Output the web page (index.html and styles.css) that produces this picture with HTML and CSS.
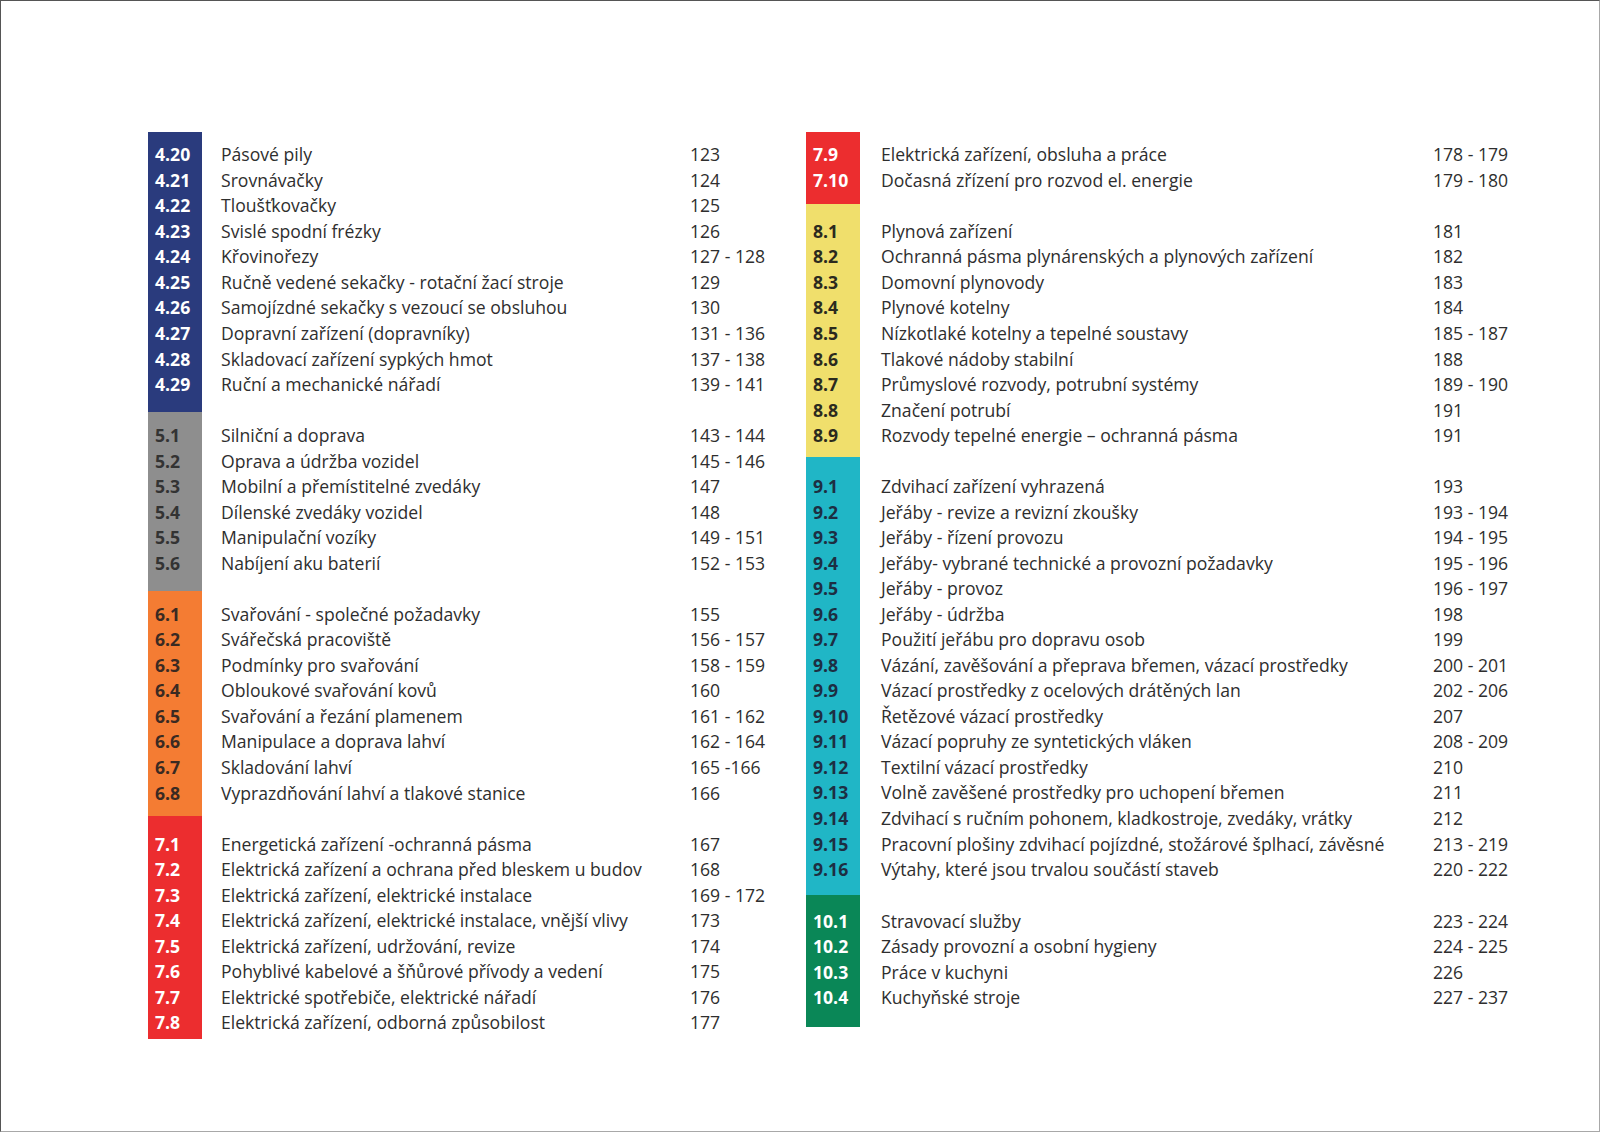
FILE: index.html
```html
<!DOCTYPE html>
<html lang="cs">
<head>
<meta charset="utf-8">
<title>Obsah</title>
<link rel="stylesheet" href="styles.css">
</head>
<body>
<div class="page">
  <div class="col col-left">
    <section class="sec blue s-l1">
      <div class="row"><span class="code">4.20</span><span class="desc">Pásové pily</span><span class="pg">123</span></div>
      <div class="row"><span class="code">4.21</span><span class="desc">Srovnávačky</span><span class="pg">124</span></div>
      <div class="row"><span class="code">4.22</span><span class="desc">Tloušťkovačky</span><span class="pg">125</span></div>
      <div class="row"><span class="code">4.23</span><span class="desc">Svislé spodní frézky</span><span class="pg">126</span></div>
      <div class="row"><span class="code">4.24</span><span class="desc">Křovinořezy</span><span class="pg">127 - 128</span></div>
      <div class="row"><span class="code">4.25</span><span class="desc">Ručně vedené sekačky - rotační žací stroje</span><span class="pg">129</span></div>
      <div class="row"><span class="code">4.26</span><span class="desc">Samojízdné sekačky s vezoucí se obsluhou</span><span class="pg">130</span></div>
      <div class="row"><span class="code">4.27</span><span class="desc">Dopravní zařízení (dopravníky)</span><span class="pg">131 - 136</span></div>
      <div class="row"><span class="code">4.28</span><span class="desc">Skladovací zařízení sypkých hmot</span><span class="pg">137 - 138</span></div>
      <div class="row"><span class="code">4.29</span><span class="desc">Ruční a mechanické nářadí</span><span class="pg">139 - 141</span></div>
    </section>
    <section class="sec gray s-l2">
      <div class="row"><span class="code">5.1</span><span class="desc">Silniční a doprava</span><span class="pg">143 - 144</span></div>
      <div class="row"><span class="code">5.2</span><span class="desc">Oprava a údržba vozidel</span><span class="pg">145 - 146</span></div>
      <div class="row"><span class="code">5.3</span><span class="desc">Mobilní a přemístitelné zvedáky</span><span class="pg">147</span></div>
      <div class="row"><span class="code">5.4</span><span class="desc">Dílenské zvedáky vozidel</span><span class="pg">148</span></div>
      <div class="row"><span class="code">5.5</span><span class="desc">Manipulační vozíky</span><span class="pg">149 - 151</span></div>
      <div class="row"><span class="code">5.6</span><span class="desc">Nabíjení aku baterií</span><span class="pg">152 - 153</span></div>
    </section>
    <section class="sec orange s-l3">
      <div class="row"><span class="code">6.1</span><span class="desc">Svařování - společné požadavky</span><span class="pg">155</span></div>
      <div class="row"><span class="code">6.2</span><span class="desc">Svářečská pracoviště</span><span class="pg">156 - 157</span></div>
      <div class="row"><span class="code">6.3</span><span class="desc">Podmínky pro svařování</span><span class="pg">158 - 159</span></div>
      <div class="row"><span class="code">6.4</span><span class="desc">Obloukové svařování kovů</span><span class="pg">160</span></div>
      <div class="row"><span class="code">6.5</span><span class="desc">Svařování a řezání plamenem</span><span class="pg">161 - 162</span></div>
      <div class="row"><span class="code">6.6</span><span class="desc">Manipulace a doprava lahví</span><span class="pg">162 - 164</span></div>
      <div class="row"><span class="code">6.7</span><span class="desc">Skladování lahví</span><span class="pg">165 -166</span></div>
      <div class="row"><span class="code">6.8</span><span class="desc">Vyprazdňování lahví a tlakové stanice</span><span class="pg">166</span></div>
    </section>
    <section class="sec red s-l4">
      <div class="row"><span class="code">7.1</span><span class="desc">Energetická zařízení -ochranná pásma</span><span class="pg">167</span></div>
      <div class="row"><span class="code">7.2</span><span class="desc">Elektrická zařízení a ochrana před bleskem u budov</span><span class="pg">168</span></div>
      <div class="row"><span class="code">7.3</span><span class="desc">Elektrická zařízení, elektrické instalace</span><span class="pg">169 - 172</span></div>
      <div class="row"><span class="code">7.4</span><span class="desc">Elektrická zařízení, elektrické instalace, vnější vlivy</span><span class="pg">173</span></div>
      <div class="row"><span class="code">7.5</span><span class="desc">Elektrická zařízení, udržování, revize</span><span class="pg">174</span></div>
      <div class="row"><span class="code">7.6</span><span class="desc">Pohyblivé kabelové a šňůrové přívody a vedení</span><span class="pg">175</span></div>
      <div class="row"><span class="code">7.7</span><span class="desc">Elektrické spotřebiče, elektrické nářadí</span><span class="pg">176</span></div>
      <div class="row"><span class="code">7.8</span><span class="desc">Elektrická zařízení, odborná způsobilost</span><span class="pg">177</span></div>
    </section>
  </div>
  <div class="col col-right">
    <section class="sec red s-r1">
      <div class="row"><span class="code">7.9</span><span class="desc">Elektrická zařízení, obsluha a práce</span><span class="pg">178 - 179</span></div>
      <div class="row"><span class="code">7.10</span><span class="desc">Dočasná zřízení pro rozvod el. energie</span><span class="pg">179 - 180</span></div>
    </section>
    <section class="sec yellow s-r2">
      <div class="row"><span class="code">8.1</span><span class="desc">Plynová zařízení</span><span class="pg">181</span></div>
      <div class="row"><span class="code">8.2</span><span class="desc">Ochranná pásma plynárenských a plynových zařízení</span><span class="pg">182</span></div>
      <div class="row"><span class="code">8.3</span><span class="desc">Domovní plynovody</span><span class="pg">183</span></div>
      <div class="row"><span class="code">8.4</span><span class="desc">Plynové kotelny</span><span class="pg">184</span></div>
      <div class="row"><span class="code">8.5</span><span class="desc">Nízkotlaké kotelny a tepelné soustavy</span><span class="pg">185 - 187</span></div>
      <div class="row"><span class="code">8.6</span><span class="desc">Tlakové nádoby stabilní</span><span class="pg">188</span></div>
      <div class="row"><span class="code">8.7</span><span class="desc">Průmyslové rozvody, potrubní systémy</span><span class="pg">189 - 190</span></div>
      <div class="row"><span class="code">8.8</span><span class="desc">Značení potrubí</span><span class="pg">191</span></div>
      <div class="row"><span class="code">8.9</span><span class="desc">Rozvody tepelné energie – ochranná pásma</span><span class="pg">191</span></div>
    </section>
    <section class="sec teal s-r3">
      <div class="row"><span class="code">9.1</span><span class="desc">Zdvihací zařízení vyhrazená</span><span class="pg">193</span></div>
      <div class="row"><span class="code">9.2</span><span class="desc">Jeřáby - revize a revizní zkoušky</span><span class="pg">193 - 194</span></div>
      <div class="row"><span class="code">9.3</span><span class="desc">Jeřáby - řízení provozu</span><span class="pg">194 - 195</span></div>
      <div class="row"><span class="code">9.4</span><span class="desc">Jeřáby- vybrané technické a provozní požadavky</span><span class="pg">195 - 196</span></div>
      <div class="row"><span class="code">9.5</span><span class="desc">Jeřáby - provoz</span><span class="pg">196 - 197</span></div>
      <div class="row"><span class="code">9.6</span><span class="desc">Jeřáby - údržba</span><span class="pg">198</span></div>
      <div class="row"><span class="code">9.7</span><span class="desc">Použití jeřábu pro dopravu osob</span><span class="pg">199</span></div>
      <div class="row"><span class="code">9.8</span><span class="desc">Vázání, zavěšování a přeprava břemen, vázací prostředky</span><span class="pg">200 - 201</span></div>
      <div class="row"><span class="code">9.9</span><span class="desc">Vázací prostředky z ocelových drátěných lan</span><span class="pg">202 - 206</span></div>
      <div class="row"><span class="code">9.10</span><span class="desc">Řetězové vázací prostředky</span><span class="pg">207</span></div>
      <div class="row"><span class="code">9.11</span><span class="desc">Vázací popruhy ze syntetických vláken</span><span class="pg">208 - 209</span></div>
      <div class="row"><span class="code">9.12</span><span class="desc">Textilní vázací prostředky</span><span class="pg">210</span></div>
      <div class="row"><span class="code">9.13</span><span class="desc">Volně zavěšené prostředky pro uchopení břemen</span><span class="pg">211</span></div>
      <div class="row"><span class="code">9.14</span><span class="desc">Zdvihací s ručním pohonem, kladkostroje, zvedáky, vrátky</span><span class="pg">212</span></div>
      <div class="row"><span class="code">9.15</span><span class="desc">Pracovní plošiny zdvihací pojízdné, stožárové šplhací, závěsné</span><span class="pg">213 - 219</span></div>
      <div class="row"><span class="code">9.16</span><span class="desc">Výtahy, které jsou trvalou součástí staveb</span><span class="pg">220 - 222</span></div>
    </section>
    <section class="sec green s-r4">
      <div class="row"><span class="code">10.1</span><span class="desc">Stravovací služby</span><span class="pg">223 - 224</span></div>
      <div class="row"><span class="code">10.2</span><span class="desc">Zásady provozní a osobní hygieny</span><span class="pg">224 - 225</span></div>
      <div class="row"><span class="code">10.3</span><span class="desc">Práce v kuchyni</span><span class="pg">226</span></div>
      <div class="row"><span class="code">10.4</span><span class="desc">Kuchyňské stroje</span><span class="pg">227 - 237</span></div>
    </section>
  </div>
</div>
</body>
</html>
```
FILE: styles.css
```css
html, body {
  margin: 0;
  padding: 0;
  background: #ffffff;
}

.page {
  box-sizing: border-box;
  width: 1600px;
  height: 1132px;
  border-top: 1px solid #555555;
  border-left: 1px solid #555555;
  border-right: 1px solid #a8a8a8;
  border-bottom: 1px solid #a8a8a8;
  padding: 131px 0 0 147px;
  display: flex;
  align-items: flex-start;
  font-family: "Open Sans", "Liberation Sans", sans-serif;
  font-size: 17.6px;
  color: #2e2e2e;
}

.col {
  display: flex;
  flex-direction: column;
}

.col-left {
  width: 658px;
}

.col-right {
  width: 640px;
}

.sec {
  --band: #888;
  background: linear-gradient(to right, var(--band) 0, var(--band) 54px, transparent 54px);
}

.row {
  display: grid;
  height: 25.54px;
  line-height: 25.54px;
  white-space: nowrap;
}

.col-left .row {
  grid-template-columns: 73px 469px auto;
}

.col-right .row {
  grid-template-columns: 75px 552px auto;
}

.code {
  padding-left: 7px;
  font-weight: 700;
}

.blue { --band: #2a3b7d; }
.gray { --band: #8e8e8e; }
.orange { --band: #f47c33; }
.red { --band: #ec2d2f; }
.yellow { --band: #f0df6c; }
.teal { --band: #20b6c6; }
.green { --band: #0a8757; }

.blue .code, .red .code, .green .code { color: #ffffff; }
.gray .code { color: #333333; }
.orange .code { color: #3a2a22; }
.yellow .code { color: #2b2a1e; }
.teal .code { color: #1d2e42; }

.s-l1 { padding: 10.3px 0 14px; }
.s-l2 { padding: 11.5px 0 15.2px; }
.s-l3 { padding: 10.3px 0 9.6px; }
.s-l4 { padding: 15.9px 0 3.1px; }

.s-r1 { padding: 10.3px 0 10.9px; }
.s-r2 { padding: 14.6px 0 8.4px; }
.s-r3 { padding: 17.1px 0 12.1px; }
.s-r4 { padding: 13.8px 0 16.1px; }
```
